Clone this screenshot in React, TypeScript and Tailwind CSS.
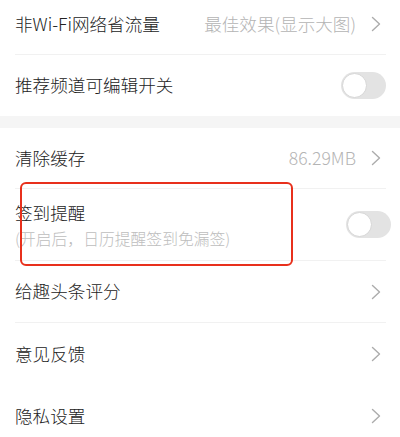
const font = { fontFamily: '"Noto Sans CJK SC", "Noto Sans", sans-serif' };

function Chevron() {
  return (
    <svg width="10" height="16" viewBox="0 0 10 16" fill="none" className="shrink-0">
      <path d="M1.5 1.5 L8.5 8 L1.5 14.5" stroke="#acacac" strokeWidth="1.4" strokeLinecap="round" strokeLinejoin="round" />
    </svg>
  );
}

function Toggle() {
  return (
    <div className="w-[45px] h-[27px] rounded-full bg-[#e3e3e3] p-[1px] flex items-center shrink-0">
      <div className="w-[25px] h-[25px] rounded-full bg-white border border-[#d6d6d6]" />
    </div>
  );
}

function Divider() {
  return <div className="ml-[15px] mr-[14px] h-px bg-[#f1f1f1]" />;
}

function LinkRow({ label, value, className = "h-[62px]" }: { label: string; value?: string; className?: string }) {
  return (
    <div className={`flex items-center pl-[15px] pr-[19px] ${className}`}>
      <span className="flex-1 text-[17.6px] font-light text-[#222]">{label}</span>
      {value && <span className="text-[17.6px] font-light text-[#b4b4b4] mr-[15px]">{value}</span>}
      <Chevron />
    </div>
  );
}

export default function App() {
  return (
    <div className="relative w-[400px] h-[437px] overflow-hidden bg-white" style={font}>
      <LinkRow label="非Wi-Fi网络省流量" value="最佳效果(显示大图)" className="h-[54px] pb-[6px]" />
      <Divider />
      <div className="flex items-center h-[61px] pl-[15px] pr-[14px]">
        <span className="flex-1 text-[17.6px] font-light text-[#222]">推荐频道可编辑开关</span>
        <Toggle />
      </div>
      <div className="h-[12px] bg-[#f5f5f5]" />
      <LinkRow label="清除缓存" value="86.29MB" className="h-[60px]" />
      <Divider />
      <div className="flex items-center h-[71px] pl-[15px] pr-[9px]">
        <div className="flex-1 flex flex-col gap-[3px] pt-[2px]">
          <span className="text-[17.6px] font-light text-[#222] leading-[24px]">签到提醒</span>
          <span className="text-[15.8px] font-light text-[#bdbdbd] leading-[22px]">(开启后，日历提醒签到免漏签)</span>
        </div>
        <Toggle />
      </div>
      <Divider />
      <LinkRow label="给趣头条评分" className="h-[61px]" />
      <Divider />
      <LinkRow label="意见反馈" />
      <LinkRow label="隐私设置" />
      <div className="absolute left-[20px] top-[182px] w-[273px] h-[84px] border-2 border-[#e8301c] rounded-[6px]" />
    </div>
  );
}
